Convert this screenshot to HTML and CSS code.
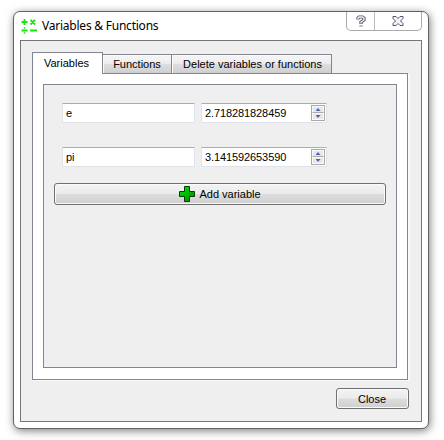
FILE: index.html
```html
<!DOCTYPE html>
<html lang="en">
<head>
<meta charset="utf-8">
<title>Variables &amp; Functions</title>
<link rel="stylesheet" href="styles.css">
</head>
<body>
<main class="window">
  <header class="titlebar">
    <svg class="app-icon" width="16" height="16" viewBox="0 0 16 16" fill="none" stroke="#12e612" stroke-width="1.8"><path d="M3.500 1v6M.5 4h6M9.500 2l4.500 4.500M14 2L9.500 6.500M.5 12.500h6M9 12.500h7"/><path d="M2.700 10h1.600M2.700 15h1.600" stroke-width="1.500"/></svg>
    <h1 class="title">Variables &amp; Functions</h1>
    <div class="controls">
      <button class="control help" aria-label="Help"><svg width="10" height="13" viewBox="0 0 10 13"><path d="M2 4.500V3l1-1h3.500L8 3v2L5 7v2M5 10.500v1" fill="none" stroke="#50566a" stroke-width="3.200"/><path d="M2 4V3l1-1h3.500L8 3v2L5 7v1.500M5 10.700v.8" fill="none" stroke="#f5f5f5" stroke-width="1.400"/></svg></button>
      <button class="control shut" aria-label="Close window"><svg width="12" height="10" viewBox="0 0 12 10"><path d="M1 .5h3l2 2 2-2h3v2L8.500 5 11 7.500v2H8l-2-2-2 2H1v-2L3.500 5 1 2.500z" fill="#f5f5f5" stroke="#50566a"/></svg></button>
    </div>
  </header>
  <section class="client">
    <nav class="tabs">
      <button class="tab active">Variables</button>
      <button class="tab functions">Functions</button>
      <button class="tab delete">Delete variables or functions</button>
    </nav>
    <div class="panel">
      <div class="content">
        <div class="row">
          <div class="field name">e</div>
          <div class="field value"><span class="number">2.718281828459</span><div class="spinner"><i class="up"></i><i class="down"></i></div></div>
        </div>
        <div class="row">
          <div class="field name">pi</div>
          <div class="field value"><span class="number">3.141592653590</span><div class="spinner"><i class="up"></i><i class="down"></i></div></div>
        </div>
        <button class="button add"><svg width="16" height="16" viewBox="0 0 16 16"><defs><linearGradient id="green" x1="0" y1="0" x2="1" y2="1"><stop stop-color="#00f000"/><stop offset="1" stop-color="#008000"/></linearGradient></defs><path d="M5.500.5h5v5h5v5h-5v5h-5v-5h-5v-5h5z" fill="url(#green)" stroke="#063b06"/></svg><span>Add variable</span></button>
      </div>
    </div>
    <footer class="footer"><button class="button close">Close</button></footer>
  </section>
</main>
</body>
</html>
```
FILE: styles.css
```css
* { box-sizing: border-box; }
body {
  margin: 0;
  padding: 11px 0 0 13px;
  height: 440px;
  overflow: hidden;
  background: #fff;
  color: #000;
  font: 11px/14px "Liberation Sans", sans-serif;
}
button { margin: 0; padding: 0; font: inherit; color: inherit; }
svg { display: block; flex: none; }
.window {
  width: 416px;
  height: 418px;
  padding: 0 6px 6px;
  border: 1px solid #626262;
  border-radius: 7px;
  background: #fff;
  box-shadow: 1px 2px 8px rgba(0, 0, 0, .5);
}
.titlebar { display: flex; height: 28px; }
.app-icon { margin: 6px 0 0 1px; }
.title {
  margin: 6px 0 0 5px;
  font: 12px/16px "Noto Sans", sans-serif;
  letter-spacing: -.23px;
  white-space: nowrap;
}
.controls {
  display: flex;
  height: 19px;
  width: 76px;
  margin: 0 0 0 auto;
  border: 1px solid #aaa;
  border-top: 0;
  border-radius: 0 0 5px 5px;
}
.control {
  display: flex;
  align-items: center;
  justify-content: center;
  border: 0;
  background: none;
}
.help { width: 28px; border-right: 1px solid #bbb; }
.shut { flex: 1; }
.client {
  width: 402px;
  height: 382px;
  padding: 11px;
  border: 1px solid #777;
  background: #efefef;
}
.tabs { display: flex; align-items: flex-end; height: 21px; }
.tab {
  height: 19px;
  border: 1px solid #838591;
  border-left: 0;
  border-bottom: 0;
  background: linear-gradient(#f3f3f3 0 20%, #ebebeb 48%, #dedede 52%, #cfcfcf);
  box-shadow: inset 1px 1px #fafafa;
  white-space: nowrap;
}
.active {
  position: relative;
  width: 71px;
  height: 22px;
  margin-bottom: -1px;
  padding: 0 2px 1px 0;
  border-left: 1px solid #838591;
  background: #fff;
}
.functions { width: 69px; }
.delete { width: 160px; padding-left: 2px; }
.panel {
  width: 376px;
  height: 307px;
  padding: 10px;
  border: 1px solid #838591;
  background: #fff;
  box-shadow: 2px 1px #fafafa;
}
.content {
  height: 284px;
  width: 354px;
  padding: 18px 10px 0;
  border: 1px solid #838591;
  background: #efefef;
}
.row { display: flex; gap: 6px; padding-left: 8px; height: 20px; margin-bottom: 24px; }
.field {
  display: flex;
  align-items: center;
  height: 20px;
  padding-left: 3px;
  border: 1px solid #e2e3ea;
  border-top-color: #abadb3;
  border-radius: 1px;
  background: #fff;
}
.name { width: 133px; }
.value { width: 126px; justify-content: space-between; padding-right: 1px; }
.number { letter-spacing: -.1px; }
.spinner {
  width: 14px;
  height: 16px;
  border: 1px solid #aaa;
  display: grid;
  grid-template-rows: 1fr 1fr;
}
.up, .down {
  display: flex;
  align-items: center;
  justify-content: center;
  background: #e8e8e8;
  border: 1px solid #fafafa;
}
.up { border-bottom-color: #aaa; }
.up::before, .down::before { content: ""; width: 5px; height: 3px; background: #4c65ae; }
.up::before { clip-path: polygon(50% 0, 100% 100%, 0 100%); }
.down::before { clip-path: polygon(0 0, 100% 0, 50% 100%); }
.button {
  display: flex;
  align-items: center;
  justify-content: center;
  gap: 4px;
  border: 1px solid #707070;
  border-radius: 3px;
  background: linear-gradient(#f3f3f3, #ebebeb 48%, #dddddd 52%, #cfcfcf);
  box-shadow: inset 0 0 0 1px #fafafa;
}
.add { width: 332px; height: 22px; margin-top: -8px; }
.footer { display: flex; justify-content: flex-end; padding: 8px 1px 0 0; }
.close { width: 73px; height: 21px; padding-right: 1px; }
```
